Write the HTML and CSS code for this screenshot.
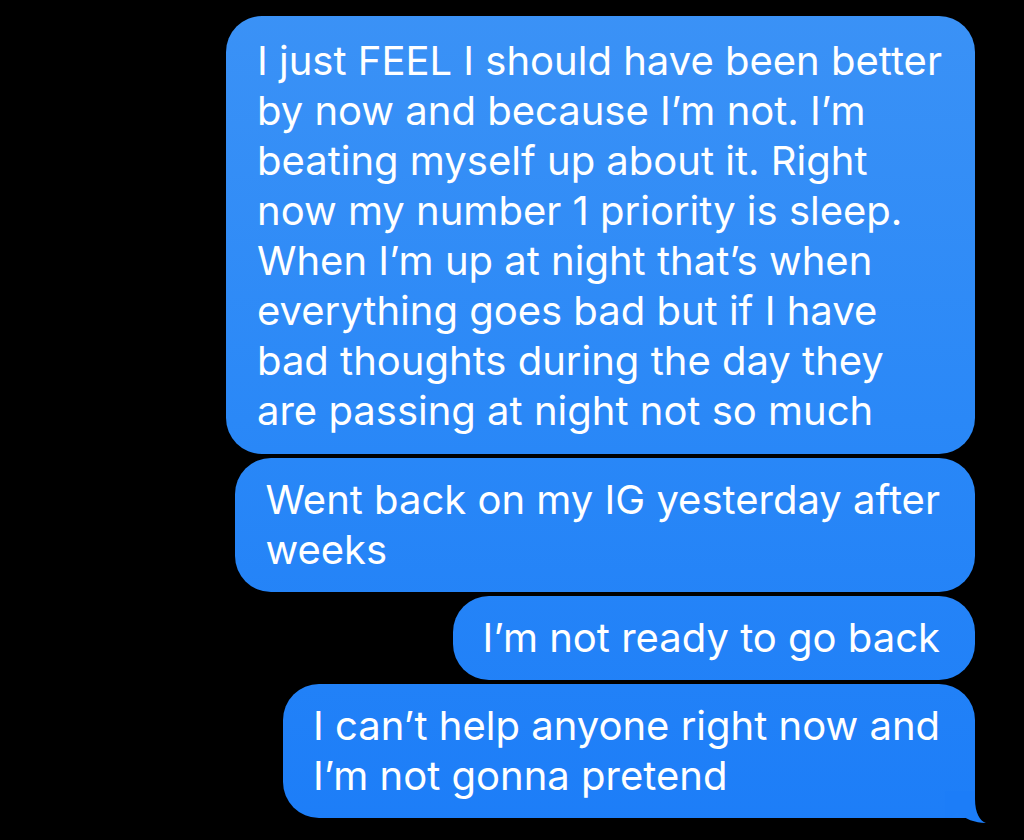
FILE: index.html
```html
<!DOCTYPE html>
<html lang="en">
<head>
  <meta charset="UTF-8" />
  <title>Messages</title>
  <link rel="stylesheet" href="styles.css">
</head>
<body>

  <!-- Conversation thread -->
  <div class="thread">
    <div class="bubble first">I just FEEL I should have been better<br>by now and because I’m not. I’m<br>beating myself up about it. Right<br>now my number 1 priority is sleep.<br>When I’m up at night that’s when<br>everything goes bad but if I have<br>bad thoughts during the day they<br>are passing at night not so much</div>
    <div class="bubble">Went back on my IG yesterday after<br>weeks</div>
    <div class="bubble">I’m not ready to go back</div>
    <div class="bubble tail">I can’t help anyone right now and<br>I’m not gonna pretend
      <svg class="tail-icon" width="42" height="33" viewBox="0 0 42 33">
        <path d="M0 27 Q7 26 12 21 C20 28 30 32 41 32 C35 30 30 22 30 8 L30 0 L0 0 Z" fill="#1c7df8"/>
      </svg>
    </div>
  </div>

</body>
</html>
```

FILE: styles.css
```css
/* Basic Reset */
* {
  margin: 0;
  padding: 0;
  box-sizing: border-box;
}

body {
  background: #000;
  font-family: "Inter", "Noto Sans", sans-serif;
  color: #fff;
  width: 1024px;
  height: 840px;
  overflow: hidden;
}

/* Thread - bubbles stacked on the right */
.thread {
  display: flex;
  flex-direction: column;
  align-items: flex-end;
  gap: 4px;
  padding: 16px 49px 0 0;
}

.bubble {
  position: relative;
  background: linear-gradient(180deg, #3b92f6 0%, #2a88f7 50%, #1c7df8 100%) fixed;
  border-radius: 36px;
  padding: 17px 35px 17px 30px;
  font-size: 40px;
  line-height: 50px;
  white-space: nowrap;
}

.bubble.first {
  padding: 20px 33px 18px 31px;
}

/* iMessage tail on last bubble */
.tail {
  border-bottom-right-radius: 8px;
}

.tail-icon {
  position: absolute;
  right: -12px;
  bottom: -6px;
  display: block;
}
```
